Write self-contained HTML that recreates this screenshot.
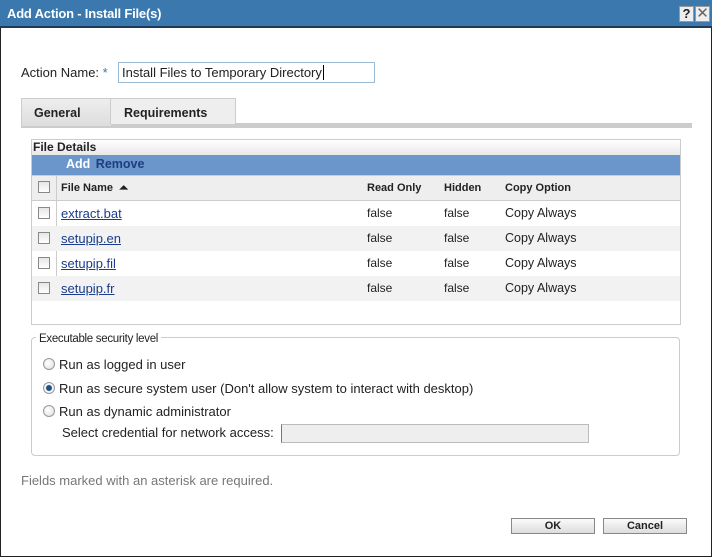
<!DOCTYPE html>
<html><head><meta charset="utf-8"><style>
*{margin:0;padding:0;box-sizing:border-box}
body{width:712px;height:557px;background:#fff;font-family:"Liberation Sans",sans-serif;font-size:12px;color:#222;position:relative;overflow:hidden}
.a{position:absolute;white-space:nowrap}
.frame{position:absolute;left:0;top:0;width:712px;height:557px;border:1px solid #222;border-top:none}
.title{left:0;top:0;width:712px;height:28px;background:#3a78ad;border-bottom:2px solid #1e3a55}
.cb{position:absolute;width:12px;height:12px;border:1px solid #888;background:linear-gradient(#e6e6e6,#fff)}
.lnk{color:#1a3c8c;text-decoration:underline;font-size:13px}
.rad{position:absolute;width:12px;height:12px;border-radius:50%;border:1px solid #999;background:radial-gradient(circle at 40% 40%,#fff,#ddd)}
.btn{position:absolute;height:16px;border:1px solid #888;background:linear-gradient(#fafafa,#ddd);font-weight:bold;font-size:11px;text-align:center;line-height:14px}
.t13{font-size:13px}
</style></head><body>
<div class="frame"></div>
<div class="a title"></div>
<div class="a" style="left:7px;top:6px;color:#fff;font-weight:bold;font-size:13px;letter-spacing:-0.2px">Add Action - Install File(s)</div>
<div class="a" style="left:679px;top:6px;width:15px;height:16px;background:#eee;border:1px solid #999;font-weight:bold;font-size:13px;text-align:center;line-height:14px;color:#222">?</div>
<div class="a" style="left:695px;top:6px;width:15px;height:16px;background:#eee;border:1px solid #999;font-size:15px;text-align:center;line-height:14px;color:#666">✕</div>

<div class="a t13" style="left:21px;top:65px">Action Name: <span style="color:#3a78ad">*</span></div>
<div class="a" style="left:118px;top:62px;width:257px;height:21px;border:1px solid #9bbad6;padding:2px 3px;font-size:13px">Install Files to Temporary Directory<span style="border-left:1px solid #000;margin-left:1px"></span></div>

<div class="a" style="left:21px;top:123px;width:671px;height:5px;background:#ccc"></div>
<div class="a" style="left:21px;top:98px;width:90px;height:28px;background:linear-gradient(#eee,#ddd);border-top:1px solid #ccc;border-left:1px solid #ccc;font-weight:bold;font-size:12.5px;padding:7px 0 0 12px">General</div>
<div class="a" style="left:110px;top:98px;width:126px;height:26px;background:#eee;border:1px solid #ccc;border-bottom:none;font-weight:bold;font-size:12.5px;padding:7px 0 0 13px">Requirements</div>

<div class="a" style="left:31px;top:139px;width:650px;height:186px;border:1px solid #ccc"></div>
<div class="a" style="left:32px;top:140px;width:648px;height:15px;background:linear-gradient(#fff,#e8e8e8);font-weight:bold;padding-left:1px;line-height:15px">File Details</div>
<div class="a" style="left:32px;top:155px;width:648px;height:20px;background:#6a96cc;font-weight:bold;line-height:19px;font-size:12.5px"><span style="margin-left:34px;color:#fff">Add</span> <span style="margin-left:2px;color:#1f3d80">Remove</span></div>
<div class="a" style="left:32px;top:175px;width:648px;height:26px;background:#eee;border-bottom:1px solid #ccc;border-top:1px solid #ccc"></div>
<div class="a" style="left:56px;top:176px;width:1px;height:124px;background:#ccc"></div>
<div class="cb" style="left:38px;top:181px"></div>
<div class="a" style="left:61px;top:182px;font-weight:bold;font-size:11px">File Name &nbsp;⏶</div>
<div class="a" style="left:367px;top:182px;font-weight:bold;font-size:11px">Read Only</div>
<div class="a" style="left:444px;top:182px;font-weight:bold;font-size:11px">Hidden</div>
<div class="a" style="left:505px;top:182px;font-weight:bold;font-size:11px">Copy Option</div>

<div class="a" style="left:32px;top:226px;width:648px;height:25px;background:#f2f2f2"></div>
<div class="a" style="left:32px;top:276px;width:648px;height:25px;background:#f2f2f2"></div>
<div class="cb" style="left:38px;top:207px"></div><div class="a lnk" style="left:61px;top:206px">extract.bat</div>
<div class="cb" style="left:38px;top:232px"></div><div class="a lnk" style="left:61px;top:231px">setupip.en</div>
<div class="cb" style="left:38px;top:257px"></div><div class="a lnk" style="left:61px;top:256px">setupip.fil</div>
<div class="cb" style="left:38px;top:282px"></div><div class="a lnk" style="left:61px;top:281px">setupip.fr</div>
<div class="a" style="left:367px;top:201px;line-height:25px">false<br>false<br>false<br>false</div>
<div class="a" style="left:444px;top:201px;line-height:25px">false<br>false<br>false<br>false</div>
<div class="a" style="left:505px;top:201px;line-height:25px;font-size:12.5px">Copy Always<br>Copy Always<br>Copy Always<br>Copy Always</div>

<div class="a" style="left:31px;top:337px;width:649px;height:119px;border:1px solid #ccc;border-radius:4px"></div>
<div class="a" style="left:36px;top:333px;background:#fff;padding:0 3px;font-size:11.5px;letter-spacing:-0.3px">Executable security level</div>
<div class="rad" style="left:43px;top:358px"></div><div class="a t13" style="left:59px;top:357px">Run as logged in user</div>
<div class="rad" style="left:43px;top:382px;background:radial-gradient(circle,#1d4f8a 0 2.5px,#fff 3.5px,#ddd)"></div><div class="a t13" style="left:59px;top:381px">Run as secure system user (Don't allow system to interact with desktop)</div>
<div class="rad" style="left:43px;top:405px"></div><div class="a t13" style="left:59px;top:404px">Run as dynamic administrator</div>
<div class="a t13" style="left:62px;top:425px">Select credential for network access:</div>
<div class="a" style="left:281px;top:424px;width:308px;height:19px;background:#eee;border:1px solid #bbb;border-left-color:#777"></div>

<div class="a t13" style="left:21px;top:473px;color:#777">Fields marked with an asterisk are required.</div>
<div class="btn" style="left:511px;top:518px;width:84px">OK</div>
<div class="btn" style="left:603px;top:518px;width:84px">Cancel</div>
</body></html>
